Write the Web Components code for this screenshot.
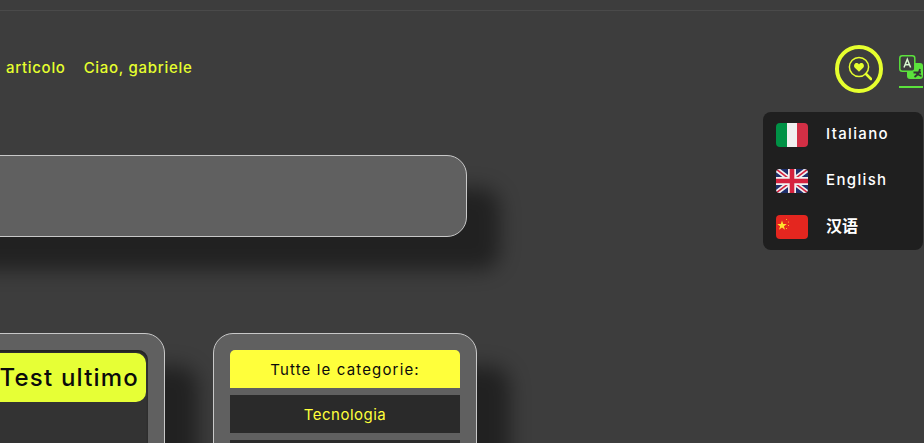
<!DOCTYPE html>
<html lang="it">
<head>
<meta charset="utf-8">
<title>Articoli</title>
<style>
  html, body { margin: 0; height: 100%; overflow: hidden; background: #3d3d3d; }
  body { font-family: "Inter", "Noto Sans CJK SC", sans-serif; }
</style>
</head>
<body>
<site-page>
  <site-header slot="header">
    <a slot="nav">articolo</a>
    <a slot="nav">Ciao, gabriele</a>
  </site-header>
  <hero-box slot="hero"></hero-box>
  <post-card slot="cards" heading="Test ultimo"></post-card>
  <category-card slot="cards" heading="Tutte le categorie:">
    <category-item>Tecnologia</category-item>
    <category-item></category-item>
  </category-card>
</site-page>

<script>
class SitePage extends HTMLElement {
    constructor() {
        super();
        this.attachShadow({ mode: 'open' });
        this.shadowRoot.innerHTML = `
            <style>
                :host { display: block; height: 443px; overflow: hidden; }
                .topline { height: 10px; border-bottom: 1px solid #4a4a4a; }
                .content { display: flex; flex-direction: column; }
                .cards { display: flex; gap: 48px; margin: 96px 0 0 -100px; align-items: flex-start; }
                .hero { margin: 43px 0 0 -100px; }
            </style>
            <div class="topline"></div>
            <div class="content">
                <slot name="header"></slot>
                <div class="hero"><slot name="hero"></slot></div>
                <div class="cards"><slot name="cards"></slot></div>
            </div>
        `;
    }
}

class SiteHeader extends HTMLElement {
    constructor() {
        super();
        this.attachShadow({ mode: 'open' });
        this.shadowRoot.innerHTML = `
            <style>
                :host { display: flex; align-items: center; justify-content: space-between; height: 101px; position: relative; color: #e6ff2e; }
                nav { display: flex; gap: 18px; padding-left: 6px; margin-top: 12px; font-size: 15px; font-weight: 500; letter-spacing: .7px; }
                .tools { display: flex; align-items: flex-start; gap: 16px; margin-top: 24px; height: 58px; padding-right: 1px; }
                .search { width: 48px; height: 48px; border: 4px solid #e6ff2e; border-radius: 50%; box-sizing: border-box; display: flex; align-items: center; justify-content: center; }
                .lang { width: 24px; height: 31px; padding-top: 10px; border-bottom: 2px solid #5be23c; }
                svg { display: block; }
                lang-menu { position: absolute; top: 101px; right: 1px; }
            </style>
            <nav><slot name="nav"></slot></nav>
            <div class="tools">
                <div class="search">
                    <svg width="26" height="26" viewBox="0 0 26 26" fill="none">
                        <circle cx="13" cy="11" r="9.6" stroke="#e6ff2e" stroke-width="1.5"/>
                        <path d="M20 18 L25 23" stroke="#e6ff2e" stroke-width="2.6" stroke-linecap="round"/>
                        <path transform="translate(2 0)" d="M11 15.8 L6.8 11.7 C5.2 9.8 6.4 7 8.6 7 C9.7 7 10.5 7.6 11 8.4 C11.5 7.6 12.3 7 13.4 7 C15.6 7 16.8 9.8 15.2 11.7 Z" fill="#e6ff2e"/>
                    </svg>
                </div>
                <div class="lang">
                    <svg width="24" height="25" viewBox="0 0 24 25" fill="none">
                        <rect x="8" y="8" width="16" height="16" rx="3" fill="#5be23c"/>
                        <rect x=".8" y=".8" width="15" height="15.5" rx="2.5" fill="#3d3d3d" stroke="#5be23c" stroke-width="1.5"/>
                        <path d="M5 12.5 L8.3 4.2 L11.6 12.5 M6.2 9.8 H10.4" stroke="#d8f7d0" stroke-width="1.5"/>
                        <path d="M15.5 22 C18.5 20 20.5 17 21 14 M16.5 17 C18 19 20 20.5 22.5 21 M14.5 17.5 H22" stroke="#333" stroke-width="1.8"/>
                    </svg>
                </div>
            </div>
            <lang-menu></lang-menu>
        `;
    }
}

class LangMenu extends HTMLElement {
    constructor() {
        super();
        this.attachShadow({ mode: 'open' });
        this.shadowRoot.innerHTML = `
            <style>
                :host { display: flex; flex-direction: column; width: 160px; height: 138px; background: #1f1f1f; border-radius: 8px; color: #fff; font-size: 15px; font-weight: 500; letter-spacing: 1.35px; }
                .row { flex: 1; display: flex; align-items: center; gap: 18px; padding-left: 13px; }
                .row span { margin-top: -3px; }
                svg { display: block; border-radius: 4px; flex: none; }
                .row .zh { font-family: "Noto Sans CJK SC", sans-serif; font-weight: 700; letter-spacing: 0; font-size: 16px; margin-top: -4px; }
            </style>
            <div class="row">
                <svg width="32" height="24" viewBox="0 0 32 24"><rect width="11" height="24" fill="#009246"/><rect x="11" width="11" height="24" fill="#f1f0f0"/><rect x="21" width="11" height="24" fill="#d22f45"/></svg>
                <span>Italiano</span>
            </div>
            <div class="row">
                <svg width="32" height="24" viewBox="0 0 32 24">
                    <rect width="32" height="24" fill="#1f2f6b"/>
                    <path d="M0 0 L32 24 M32 0 L0 24" stroke="#f1f1f1" stroke-width="5"/>
                    <path d="M0 0 L32 24 M32 0 L0 24" stroke="#d5233f" stroke-width="1.6"/>
                    <path d="M16 0 V24 M0 12 H32" stroke="#f1f1f1" stroke-width="8"/>
                    <path d="M16 0 V24 M0 12 H32" stroke="#d5233f" stroke-width="4.6"/>
                </svg>
                <span>English</span>
            </div>
            <div class="row">
                <svg width="32" height="24" viewBox="0 0 32 24">
                    <rect width="32" height="24" fill="#e4261f"/>
                    <path d="M6 5.5 L7.2 9 L10.8 9 L7.9 11.2 L9 14.7 L6 12.6 L3 14.7 L4.1 11.2 L1.2 9 L4.8 9 Z" fill="#ffdf2e"/>
                    <circle cx="10.5" cy="4.5" r=".5" fill="#ffdf2e"/><circle cx="12.5" cy="7" r=".5" fill="#ffdf2e"/><circle cx="12.5" cy="10.5" r=".5" fill="#ffdf2e"/><circle cx="10.5" cy="13.5" r=".5" fill="#ffdf2e"/>
                </svg>
                <span class="zh">汉语</span>
            </div>
        `;
    }
}

class HeroBox extends HTMLElement {
    constructor() {
        super();
        this.attachShadow({ mode: 'open' });
        this.shadowRoot.innerHTML = `
            <style>
                :host { display: block; width: 567px; height: 82px; box-sizing: border-box; background: #606060; border: 1px solid #c8c8c8; border-radius: 20px; box-shadow: 33px 33px 20px 0 rgba(0,0,0,.45); }
            </style>
        `;
    }
}

class PostCard extends HTMLElement {
    constructor() {
        super();
        this.attachShadow({ mode: 'open' });
        this.shadowRoot.innerHTML = `
            <style>
                :host { display: block; width: 265px; height: 300px; box-sizing: border-box; background: #606060; border: 1px solid #c8c8c8; border-radius: 20px; padding: 16px 16px 0 0; box-shadow: 33px 33px 20px 0 rgba(0,0,0,.45); }
                .inner { height: 280px; background: #333; border-radius: 10px; padding: 3px 2px 0 0; box-shadow: inset 0 2px 2px #222; }
                h2 { margin: 0; height: 49px; display: flex; align-items: center; justify-content: flex-end; padding-right: 7px; background: #e6ff36; border-radius: 10px; color: #0b0b0b; font-size: 24px; font-weight: 500; letter-spacing: 1.2px; }
            </style>
            <div class="inner"><h2></h2></div>
        `;
    }
    connectedCallback() {
        this.shadowRoot.querySelector('h2').textContent = this.getAttribute('heading');
    }
}

class CategoryCard extends HTMLElement {
    constructor() {
        super();
        this.attachShadow({ mode: 'open' });
        this.shadowRoot.innerHTML = `
            <style>
                :host { display: block; width: 264px; height: 300px; box-sizing: border-box; background: #606060; border: 1px solid #c8c8c8; border-radius: 20px; padding: 16px; box-shadow: 33px 33px 20px 0 rgba(0,0,0,.45); }
                h3 { margin: 0 0 7px; height: 38px; display: flex; align-items: center; justify-content: center; background: #ffff3b; border-radius: 5px 5px 0 0; color: #0b0b0b; font-size: 15px; font-weight: 400; letter-spacing: 1.15px; }
                .list { display: flex; flex-direction: column; gap: 7px; }
            </style>
            <h3></h3>
            <div class="list"><slot></slot></div>
        `;
    }
    connectedCallback() {
        this.shadowRoot.querySelector('h3').textContent = this.getAttribute('heading');
    }
}

class CategoryItem extends HTMLElement {
    constructor() {
        super();
        this.attachShadow({ mode: 'open' });
        this.shadowRoot.innerHTML = `
            <style>
                :host { display: flex; height: 38px; align-items: center; justify-content: center; background: #2a2a2a; color: #ffff3b; font-size: 15px; font-weight: 400; letter-spacing: .5px; }
            </style>
            <slot></slot>
        `;
    }
}

customElements.define('site-page', SitePage);
customElements.define('site-header', SiteHeader);
customElements.define('lang-menu', LangMenu);
customElements.define('hero-box', HeroBox);
customElements.define('post-card', PostCard);
customElements.define('category-card', CategoryCard);
customElements.define('category-item', CategoryItem);
</script>
</body>
</html>
